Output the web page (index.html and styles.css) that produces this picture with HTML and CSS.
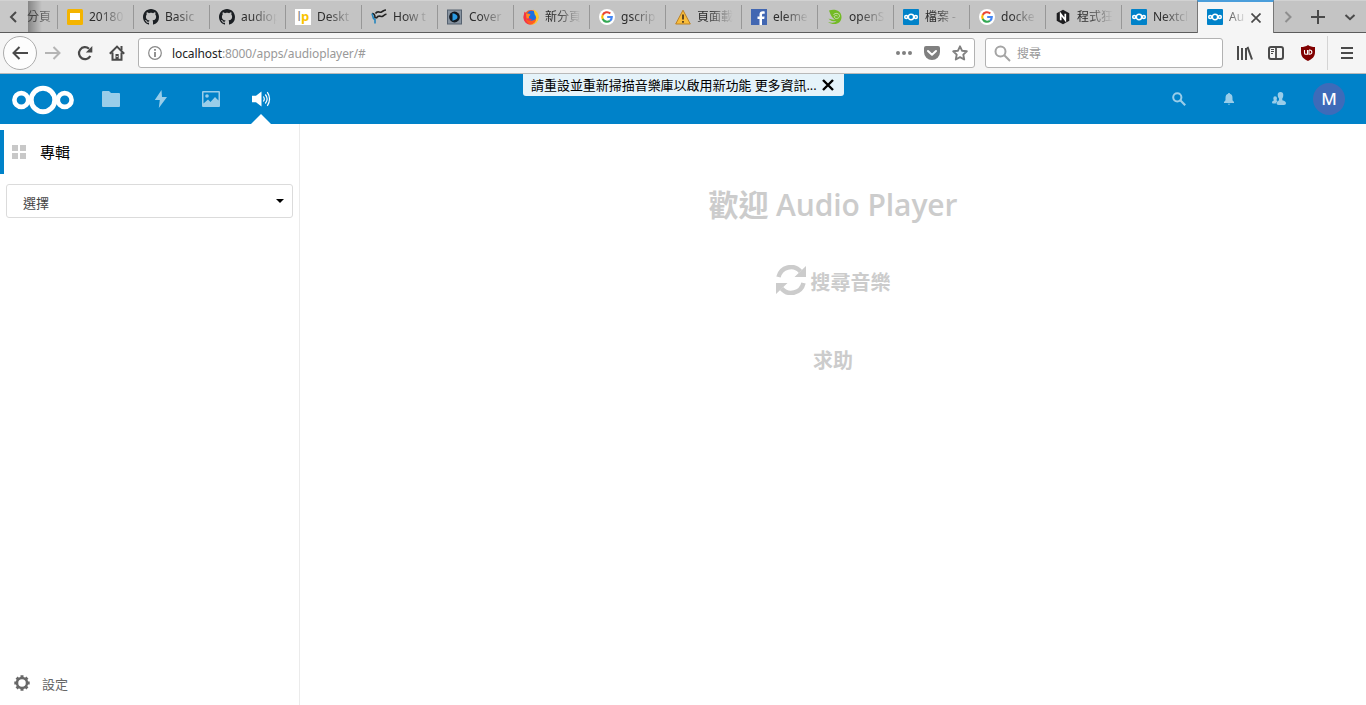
FILE: index.html
```html
<!DOCTYPE html>
<html lang="zh-Hant">
<head>
<meta charset="utf-8">
<title>Audio Player</title>
<link rel="stylesheet" href="styles.css">
</head>
<body>
<svg class="defs" width="0" height="0">
  <symbol id="github" viewBox="0 0 16 16"><path fill="#1b1f23" d="M8 0C3.58 0 0 3.58 0 8c0 3.54 2.29 6.53 5.47 7.59.4.07.55-.17.55-.38 0-.19-.01-.82-.01-1.49-2.01.37-2.53-.49-2.69-.94-.09-.23-.48-.94-.82-1.13-.28-.15-.68-.52-.01-.53.63-.01 1.08.58 1.23.82.72 1.21 1.87.87 2.33.66.07-.52.28-.87.51-1.07-1.78-.2-3.64-.89-3.64-3.95 0-.87.31-1.59.82-2.15-.08-.2-.36-1.02.08-2.12 0 0 .67-.21 2.2.82.64-.18 1.32-.27 2-.27s1.36.09 2 .27c1.53-1.04 2.2-.82 2.2-.82.44 1.1.16 1.92.08 2.12.51.56.82 1.27.82 2.15 0 3.07-1.87 3.75-3.65 3.95.29.25.54.73.54 1.48 0 1.07-.01 1.93-.01 2.2 0 .21.15.46.55.38A8.01 8.01 0 0 0 16 8c0-4.42-3.58-8-8-8z"/></symbol>
  <symbol id="google" viewBox="0 0 16 16"><circle cx="8" cy="8" r="8" fill="#fff"/><g fill="none" stroke-width="2.1"><path stroke="#ea4335" d="M3.7 6A4.8 4.8 0 0 1 11.3 4.500"/><path stroke="#fbbc05" d="M3.800 10.200A4.800 4.800 0 0 1 3.800 5.800"/><path stroke="#34a853" d="M11 11.700A4.800 4.800 0 0 1 3.700 10"/><path stroke="#4285f4" d="M8.200 8h4.600A4.800 4.800 0 0 1 11 11.700"/></g></symbol>
  <symbol id="next" viewBox="0 0 16 16"><rect width="16" height="16" rx="1" fill="#0082c9"/><g fill="none" stroke="#fff" stroke-width="1.500"><circle cx="8" cy="8" r="2.700"/><circle cx="3.200" cy="8" r="1.500"/><circle cx="12.800" cy="8" r="1.500"/></g></symbol>
</svg>

<div class="tabbar">
  <div class="scroll-left"><svg width="10" height="14" viewBox="0 0 10 14"><path d="M8 2 3 7l5 5" fill="none" stroke="#4a4a4a" stroke-width="2"/></svg></div>
  <div class="tab-rest"><span class="tab-label">分頁</span></div>
  <div class="tab"><svg class="fav" viewBox="0 0 16 16"><rect width="16" height="16" rx="1.5" fill="#f4b400"/><rect x="3" y="4" width="10" height="7" fill="#fff"/></svg><span class="tab-label">20180</span></div>
  <div class="tab"><svg class="fav"><use href="#github"/></svg><span class="tab-label">Basic</span></div>
  <div class="tab"><svg class="fav"><use href="#github"/></svg><span class="tab-label">audiop</span></div>
  <div class="tab"><svg class="fav" viewBox="0 0 16 16"><rect width="16" height="16" fill="#fff"/><text x="2.500" y="12" class="lp" fill="#777">l</text><text x="6" y="12" class="lp bold" fill="#f8c300">p</text></svg><span class="tab-label">Deskt</span></div>
  <div class="tab"><svg class="fav" viewBox="0 0 16 16"><path d="M4.500 4.500c2-3.500 4-.5 6-1.500s2.500-2 4.500-2M5.500 9c2-3.500 4-1 5.500-1.500s2.500-2.200 4.500-2.200M1 4.500c2.500 0 3 2 3 4l1.500.5" fill="none" stroke="#222" stroke-width="1.600"/><path d="M1 4.500l1.500 5 1.500 1v4" fill="none" stroke="#2385bd" stroke-width="1.600"/></svg><span class="tab-label">How t</span></div>
  <div class="tab"><svg class="fav" viewBox="0 0 16 16"><rect x=".5" y="1" width="14" height="14" fill="#8894a1" stroke="#566270"/><circle cx="7.500" cy="8" r="5.400" fill="#111820"/><path d="M5.500 4.300q5 1 5 3.700t-5 3.700z" fill="#2a9ae2"/></svg><span class="tab-label">Cover</span></div>
  <div class="tab"><svg class="fav" viewBox="0 0 16 16"><circle cx="8" cy="8.400" r="7.300" fill="#ff5a22"/><circle cx="8.500" cy="6.800" r="5" fill="#1d6fe0"/><path d="M10.500.5c4 2 6.500 6 4.500 10.500-1.500 3.500-5 4.700-7 4.700 3-1 5.200-3 5.200-6.200 0-2-.7-3-1.500-4z" fill="#ffc928"/><path d="M1.500 2.500 3 4.500l3 .3 1.500 1-1.700 1.700.2 1.800 3 .9c-1.500 2-5 1.500-6-.8C2.500 12 5 14.500 8 15.700 3 15.700.3 12 .5 7.500z" fill="#f33348"/><path d="M3 4.500l3 .3 1.500 1-1.700 1.700.2 1.800-2.500.2z" fill="#ff8d1e"/></svg><span class="tab-label">新分頁</span></div>
  <div class="tab"><svg class="fav"><use href="#google"/></svg><span class="tab-label">gscrip</span></div>
  <div class="tab"><svg class="fav" viewBox="0 0 16 16"><path d="M8 1.200 15.300 15H.7z" fill="#f9bd3b" stroke="#bc8124" stroke-linejoin="round"/><path d="M8 5.500v5M8 12v1.700" stroke="#493319" stroke-width="1.700"/></svg><span class="tab-label">頁面載</span></div>
  <div class="tab"><svg class="fav" viewBox="0 0 16 16"><rect width="16" height="16" fill="#4267b2"/><path d="M11 16v-6h2.200l.4-2.500H11V6c0-.8.4-1.300 1.400-1.300h1.300V2.500c-3.500-.6-5.200.5-5.200 3v2h-2V10h2v6z" fill="#fff"/></svg><span class="tab-label">eleme</span></div>
  <div class="tab"><svg class="fav" viewBox="0 0 16 16"><path d="M2 1.500C7-.5 14.500 1 14.500 8S7 17 1 13c4 1.300 7 .8 8.500-.7C6 12.500 3 12 1.500 9.500 4 10.500 6 11 8 10.500 4 8 3 4 2 1.500z" fill="#73ba25"/><path d="M6.500 6c1-2.500 6-2 6 .8S8.500 10.300 7.500 8.500s1.500-2.500 3-1.500" fill="none" stroke="#cde0b8" stroke-width=".9"/></svg><span class="tab-label">openS</span></div>
  <div class="tab"><svg class="fav"><use href="#next"/></svg><span class="tab-label dash">檔案 -</span></div>
  <div class="tab"><svg class="fav"><use href="#google"/></svg><span class="tab-label">docke</span></div>
  <div class="tab"><svg class="fav" viewBox="0 0 16 16"><path d="M8 .8 14.300 4.300v7.400L8 15.200 1.700 11.700V4.300z" fill="#1d1d1f"/><path d="M5.700 11.300V5l4.600 6V4.700" fill="none" stroke="#fff" stroke-width="1.700"/></svg><span class="tab-label">程式狂</span></div>
  <div class="tab"><svg class="fav"><use href="#next"/></svg><span class="tab-label">Nextcl</span></div>
  <div class="tab active"><svg class="fav"><use href="#next"/></svg><span class="tab-label">Au</span><svg class="close" viewBox="0 0 10 10"><path d="M.5.5l9 9M9.500.5l-9 9" stroke="#4a4a4a" stroke-width="1.700"/></svg></div>
  <div class="tab-tools">
    <svg width="10" height="14" viewBox="0 0 10 14"><path d="M2.500 2l5 5-5 5" fill="none" stroke="#8e8e8e" stroke-width="2"/></svg>
    <svg width="14" height="14" viewBox="0 0 14 14"><path d="M7 0v14M0 7h14" stroke="#4a4a4a" stroke-width="2"/></svg>
    <svg width="12" height="8" viewBox="0 0 12 8"><path d="M1.500 2 6 6.200 10.500 2" fill="none" stroke="#4a4a4a" stroke-width="2"/></svg>
  </div>
</div>

<div class="toolbar">
  <div class="back"><svg width="16" height="14" viewBox="0 0 16 14"><path d="M16 7H2M7.500 1l-6 6 6 6" fill="none" stroke="#4a4a4a" stroke-width="2"/></svg></div>
  <svg class="fwd" width="16" height="14" viewBox="0 0 16 14"><path d="M0 7h14M8.500 1l6 6-6 6" fill="none" stroke="#b4b4b4" stroke-width="2"/></svg>
  <svg class="reload" width="16" height="16" viewBox="0 0 16 16"><path d="M13.300 11A6 6 0 1 1 12 3.700" fill="none" stroke="#4a4a4a" stroke-width="2.200"/><path d="M15.300 1v6.500H8.800z" fill="#4a4a4a"/></svg>
  <svg class="home" width="16" height="16" viewBox="0 0 16 16"><path d="M.8 8.700 8 1.600l7.200 7.100M3.500 7.500v7.300h9V7.500" fill="none" stroke="#4a4a4a" stroke-width="2"/><path d="M11.500 1h2v4h-2zM6.500 9h3.200v5.500H6.500z" fill="#4a4a4a"/><path d="M7.500 11h1.200v1H7.500z" fill="#fff"/></svg>
  <div class="urlbar">
    <svg width="14" height="14" viewBox="0 0 14 14"><circle cx="7" cy="7" r="6.300" fill="none" stroke="#888" stroke-width="1.200"/><path d="M7 6v5M7 3v1.700" stroke="#777" stroke-width="1.600"/></svg>
    <span class="url"><b>localhost</b>:8000/apps/audioplayer/#</span>
    <svg class="dots" width="16" height="4" viewBox="0 0 16 4"><g fill="#808080"><circle cx="2" cy="2" r="2"/><circle cx="8" cy="2" r="2"/><circle cx="14" cy="2" r="2"/></g></svg>
    <svg class="pocket" width="16" height="14" viewBox="0 0 16 14"><path d="M2 0h12q2 0 2 2v4a8 8 0 0 1-16 0V2q0-2 2-2z" fill="#808080"/><path d="M4 5l4 3.800L12 5" fill="none" stroke="#fff" stroke-width="2" stroke-linecap="round" stroke-linejoin="round"/></svg>
    <svg class="star" width="16" height="16" viewBox="0 0 16 16"><path d="M8 1.300 10 5.700l4.800.6-3.500 3.300.9 4.900L8 12.200l-4.200 2.300.9-4.900L1.200 6.300 6 5.700z" fill="none" stroke="#808080" stroke-width="1.900" stroke-linejoin="round"/></svg>
  </div>
  <div class="search">
    <svg width="17" height="17" viewBox="0 0 17 17"><circle cx="6.500" cy="6.500" r="5" fill="none" stroke="#a4a4a4" stroke-width="2"/><path d="M10.300 10.300 16 16" stroke="#a4a4a4" stroke-width="2"/></svg>
    <span>搜尋</span>
  </div>
  <svg class="library" width="16" height="14" viewBox="0 0 16 14"><path d="M1 0v14M5 2v12M9 2v12M10.500 .8l4.500 12.700" stroke="#4a4a4a" stroke-width="2" fill="none"/></svg>
  <svg class="side" width="16" height="14" viewBox="0 0 16 14"><rect x="1" y="1" width="14" height="12" rx="2" fill="none" stroke="#4a4a4a" stroke-width="2"/><path d="M8 1v12" stroke="#4a4a4a" stroke-width="1.800"/><path d="M3 3.500h3M3 5.500h3M3 7.500h2" stroke="#4a4a4a"/></svg>
  <svg class="ublock" width="14" height="16" viewBox="0 0 14 16"><path d="M7 0c2 1.500 4.500 2 7 2v5c0 5-3 7-7 9-4-2-7-4-7-9V2c2.500 0 5-.5 7-2z" fill="#800000"/><path d="M3.500 5v3q0 1.300 1.300 1.300h1.700V5M8 5v4.300h.7a2.100 2.100 0 0 0 0-4.300H8" fill="none" stroke="#fff" stroke-width="1.100"/></svg>
  <div class="menu"><svg width="12" height="12" viewBox="0 0 12 12"><path d="M0 1h12M0 6h12M0 11h12" stroke="#4a4a4a" stroke-width="2"/></svg></div>
</div>

<header class="appbar">
  <svg class="logo" width="62" height="30" viewBox="0 0 62 30"><g fill="none" stroke="#fff"><circle cx="31" cy="15" r="11.800" stroke-width="5"/><circle cx="9.300" cy="15" r="6.900" stroke-width="4.600"/><circle cx="52.700" cy="15" r="6.900" stroke-width="4.600"/></g></svg>
  <nav class="apps">
    <div class="app"><svg width="18" height="16" viewBox="0 0 18 16"><path d="M1 0h6l2 2h8q1 0 1 1v12q0 1-1 1H1q-1 0-1-1V1q0-1 1-1z"/></svg></div>
    <div class="app"><svg width="14" height="18" viewBox="0 0 14 18"><path d="M7.500 0 .8 10h5L4.800 18 13 7H8z"/></svg></div>
    <div class="app"><svg width="18" height="16" viewBox="0 0 18 16"><path fill-rule="evenodd" d="M1 0h16q1 0 1 1v14q0 1-1 1H1q-1 0-1-1V1q0-1 1-1zM1.500 1.500v11L6 8.500 8.500 11 13 6l3.500 3.500v-8zM2 14.300h14z"/><circle cx="5" cy="5" r="1.800"/></svg></div>
    <div class="app current"><svg width="20" height="16" viewBox="0 0 20 16"><path d="M1 4.700h4l5.500-4.200v15L5 11.300H1z"/><path d="M12.300 5.500q2 2.500 0 5M14.300 3.500q3.700 4.500 0 9M16.300 1.200q4.500 6.800 0 13.600" fill="none" stroke="#fff" stroke-width="1.200"/></svg></div>
  </nav>
  <div class="right">
    <div class="tool"><svg width="14" height="14" viewBox="0 0 14 14"><circle cx="5.300" cy="5.300" r="4.100" fill="none" stroke="#99cde9" stroke-width="2"/><path d="M8.300 8.300l4.900 4.900" stroke="#99cde9" stroke-width="2.200"/></svg></div>
    <div class="tool"><svg width="10" height="12" viewBox="0 0 10 12"><path d="M4.200 0h1.600v.8Q8.500 1.300 8.500 5v2.200L10 9v1H0V9l1.500-1.800V5Q1.500 1.300 4.200.8zM3.700 10.800h2.600Q5 12.800 3.700 10.800z"/></svg></div>
    <div class="tool"><svg width="14" height="14" viewBox="0 0 14 14"><path d="M8.500 0Q11.300 0 11.300 3q0 2.500-1 3.500V8.300q3.700 1 3.700 3 0 1.700-2 1.700H6.500Q4.500 13 4.500 11.300q0-1.500 2.500-3V6.500Q5.700 5 5.700 3 5.700 0 8.500 0z"/><path d="M3 4.300Q5 4.300 5 6.300L4.500 8.300l1 .7-1.800 2.500H1q-1 0-1-1.200Q0 9.200 1.800 8.500L1.300 6.500Q1.300 4.300 3 4.300z"/></svg></div>
    <div class="avatar">M</div>
  </div>
  <div class="notice"><span>請重設並重新掃描音樂庫以啟用新功能 更多資訊...</span><svg width="12" height="12" viewBox="0 0 12 12"><path d="M1 1l10 10M11 1 1 11" stroke="#000" stroke-width="2.400"/></svg></div>
</header>

<div class="content">
  <aside class="sidebar">
    <div class="album"><svg width="14" height="14" viewBox="0 0 14 14"><path fill="#c8c8c8" d="M0 0h6v6H0zM8 0h6v6H8zM0 8h6v6H0zM8 8h6v6H8z"/></svg><span>專輯</span></div>
    <div class="select"><span>選擇</span><svg width="8" height="4" viewBox="0 0 8 4"><path d="M0 0h8L4 4z"/></svg></div>
    <div class="settings"><svg width="16" height="16" viewBox="0 0 16 16"><circle cx="8" cy="8" r="5" fill="none" stroke="#686868" stroke-width="2.500"/><path d="M8 .3v2.500M8 13.200v2.500M.3 8h2.500M13.200 8h2.500M2.600 2.600l1.700 1.700M11.700 11.700l1.700 1.700M2.600 13.400l1.700-1.700M11.700 4.300l1.700-1.700" stroke="#686868" stroke-width="3"/></svg><span>設定</span></div>
  </aside>
  <main class="main">
    <h1>歡迎 Audio Player</h1>
    <div class="scan"><svg width="30" height="30" viewBox="0 0 30 30"><path d="M2.500 12A12.700 12.700 0 0 1 24.500 6.500M27.500 18A12.700 12.700 0 0 1 5.500 23.500" fill="none" stroke="#ccc" stroke-width="4.500"/><path d="M30 1v11H18.500zM0 29V18h11.500z" fill="#ccc"/></svg><span>搜尋音樂</span></div>
    <div class="help">求助</div>
  </main>
</div>
</body>
</html>
```
FILE: styles.css
```css
* { box-sizing: border-box; }
body {
  margin: 0;
  width: 1366px;
  height: 705px;
  overflow: hidden;
  display: flex;
  flex-direction: column;
  background: #fff;
  font-family: "Noto Sans", "Noto Sans CJK TC", sans-serif;
  font-size: 12px;
}
svg { display: block; flex: none; }
.defs { position: absolute; }

.tabbar {
  flex: none;
  display: flex;
  height: 33px;
  background: #c4c4c4;
  border-bottom: 1px solid #5c5c5c;
  border-top: 1px solid #d2d2d2;
}
.scroll-left { width: 28px; display: flex; align-items: center; padding-left: 8px; background: #c8c8c8; }
.tab-rest {
  width: 29px;
  display: flex;
  align-items: center;
  background: linear-gradient(to right, #858585, #c4c4c4 14px);
}
.tab-rest .tab-label { margin-left: -1px; width: 24px; color: #444; }
.tab { position: relative; width: 76px; display: flex; align-items: center; padding-left: 10px; flex: none; }
.tab::before { content: ""; position: absolute; left: 0; top: 4px; bottom: 3px; width: 1px; background: #979797; }
.fav { width: 16px; height: 16px; margin-top: 1px; }
.lp { font: 13px "Open Sans", sans-serif; }
.lp.bold { font-weight: 700; }
.tab-label {
  margin-left: 6px;
  width: 38px;
  white-space: nowrap;
  color: #2c2c2c;
  line-height: 20px;
  -webkit-mask-image: linear-gradient(to right, #000 10px, transparent 36px);
  mask-image: linear-gradient(to right, #000 10px, transparent 36px);
}
.active {
  width: 77px;
  margin: -1px 0;
  height: 33px;
  background: #f5f5f5;
  border-top: 2px solid #4a9edb;
  border-left: 1px solid #777;
  border-right: 1px solid #777;
  padding: 0 0 2px 9px;
}
.active::before { display: none; }
.active .tab-label {
  width: 17px;
  color: #555;
  -webkit-mask-image: linear-gradient(to right, #000, transparent 18px);
  mask-image: linear-gradient(to right, #000, transparent 18px);
}
.close { width: 10px; height: 10px; margin: 2px 0 0 5px; }
.tab-tools { flex: 1; display: flex; align-items: center; padding-left: 9px; }
.tab-tools svg:nth-child(2) { margin-left: 18px; }
.tab-tools svg:nth-child(3) { margin-left: 19px; }

.toolbar {
  flex: none;
  display: flex;
  align-items: center;
  height: 41px;
  padding-left: 3px;
  background: #f5f5f5;
  border-bottom: 1px solid #b9b9b9;
}
.back {
  width: 34px;
  height: 34px;
  border-radius: 50%;
  border: 1px solid #acacac;
  background: #fdfdfd;
  display: flex;
  align-items: center;
  justify-content: center;
}
.fwd { margin-left: 8px; }
.reload { margin-left: 16px; }
.home { margin-left: 16px; }
.urlbar, .search {
  height: 30px;
  border: 1px solid #b2b2b2;
  border-radius: 3px;
  background: #fff;
  display: flex;
  align-items: center;
}
.urlbar { width: 837px; margin-left: 13px; padding: 0 6px 0 9px; }
.url { flex: 1; margin-left: 10px; color: #999; letter-spacing: -0.09px; }
.url b { font-weight: 400; color: #222; }
.pocket { margin-left: 12px; }
.star { margin-left: 12px; }
.search { width: 238px; margin-left: 10px; padding-left: 8px; color: #999; }
.search span { margin-left: 6px; }
.library { margin-left: 14px; }
.side { margin-left: 15px; }
.ublock { margin-left: 17px; }
.menu { margin-left: 12px; height: 34px; border-left: 1px solid #d4d4d4; padding-left: 13px; display: flex; align-items: center; }

.appbar { position: relative; flex: none; display: flex; align-items: center; height: 50px; background: #0082c9; }
.logo { margin-left: 12px; margin-top: 2px; }
.apps { display: flex; margin-left: 12px; height: 50px; }
.app { position: relative; width: 50px; display: flex; align-items: center; justify-content: center; fill: #99cde9; }
.current { fill: #fff; }
.current::after {
  content: "";
  position: absolute;
  bottom: 0;
  left: 15px;
  border: 10px solid transparent;
  border-bottom-color: #fff;
  border-top: 0;
}
.right { display: flex; align-items: center; margin-left: auto; padding-right: 21px; }
.tool { width: 50px; display: flex; justify-content: center; fill: #99cde9; }
.avatar {
  width: 32px;
  height: 32px;
  margin-left: 9px;
  border-radius: 50%;
  background: #3e6bb9;
  color: #fff;
  font: 500 17px/32px "Noto Sans", sans-serif;
  text-align: center;
}
.notice {
  position: absolute;
  left: 523px;
  top: 0;
  width: 321px;
  height: 22px;
  padding-left: 8px;
  border-radius: 0 0 3px 3px;
  background: #e5f3fa;
  color: #000;
  display: flex;
  align-items: center;
  font-family: "Open Sans", "Noto Sans CJK TC", sans-serif;
  font-size: 13px;
  white-space: nowrap;
}
.notice span { margin-top: -2px; letter-spacing: -0.04px; }
.notice svg { margin-left: 5px; }

.content { flex: 1; display: flex; font-family: "Open Sans", "Noto Sans CJK TC", sans-serif; }
.sidebar { width: 300px; border-right: 1px solid #ebebeb; padding-top: 6px; display: flex; flex-direction: column; }
.album { height: 44px; border-left: 4px solid #0082c9; padding-left: 8px; display: flex; align-items: center; font-size: 15px; color: #000; }
.album span { margin: -2px 0 0 14px; }
.select {
  width: 287px;
  height: 34px;
  margin: 10px 0 0 6px;
  border: 1px solid #dbdbdb;
  border-radius: 3px;
  padding: 2px 8px 0 16px;
  display: flex;
  align-items: center;
  justify-content: space-between;
  font-size: 13px;
  color: #444;
}
.select svg { margin-top: -2px; }
.settings { margin-top: auto; height: 44px; display: flex; align-items: center; padding-left: 14px; font-size: 13px; color: #666; }
.settings span { margin: 0 0 0 12px; }
.main { flex: 1; display: flex; flex-direction: column; align-items: center; color: #ccc; font-weight: 600; }
h1 { margin: 58px 0 0; font-size: 30px; font-weight: 600; line-height: 46px; letter-spacing: -0.1px; }
.scan { display: flex; align-items: center; margin-top: 36px; height: 30px; font-size: 20px; font-weight: 700; }
.scan svg { margin-top: 1px; }
.scan span { margin: 5px 0 0 5px; }
.help { margin-top: 52px; font-size: 20px; font-weight: 700; line-height: 30px; }
```
